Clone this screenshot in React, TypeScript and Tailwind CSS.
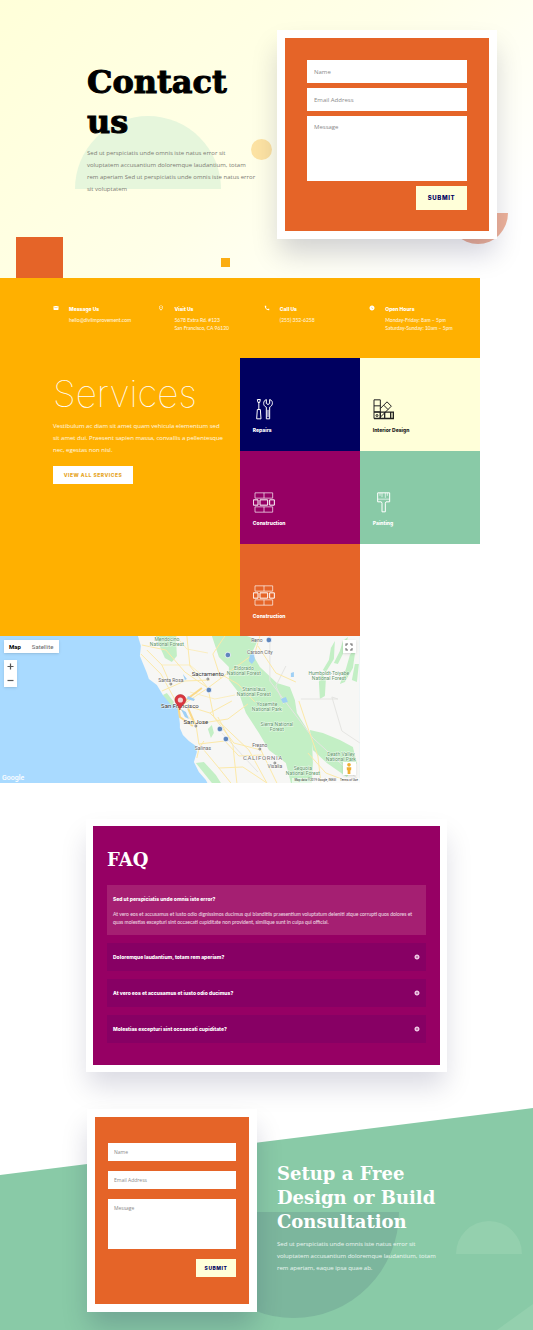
import React, { useState } from "react";
import {
  MdAddCircle,
  MdCall,
  MdEmail,
  MdFullscreen,
  MdOutlinePlace,
  MdWatchLater,
} from "react-icons/md";

const display = "font-['DejaVu_Serif',serif] font-bold";
const heading = "font-['Inter',sans-serif] font-extrabold";

function ContactForm({ id, compact = false }: { id: string; compact?: boolean }) {
  const field =
    "block w-full rounded-none border-0 bg-white text-gray-700 placeholder:text-[#8a8a8a] outline-none " +
    (compact ? "px-[6px] text-[5px]" : "px-[7px] text-[6px]");
  return (
    <div className="bg-white p-2 shadow-[0_16px_26px_-2px_rgba(0,0,60,0.18)]">
      <form
        onSubmit={(e) => e.preventDefault()}
        className={
          "flex flex-col bg-[#e56428] " +
          (compact ? "gap-[10px] px-[13px] pt-[26px] pb-[27px]" : "gap-[5px] px-[22px] pt-[22px] pb-[21px]")
        }
      >
        <input
          id={id + "-name"}
          aria-label="Name"
          placeholder="Name"
          className={field + (compact ? " h-[18px]" : " h-[23px]")}
        />
        <input
          id={id + "-email"}
          type="email"
          aria-label="Email Address"
          placeholder="Email Address"
          className={field + (compact ? " h-[18px]" : " h-[23px]")}
        />
        <textarea
          id={id + "-message"}
          aria-label="Message"
          placeholder="Message"
          className={
            field +
            (compact
              ? " h-[50px] resize-none pt-[5px] leading-[8px]"
              : " h-[65px] resize-none pt-[7px] leading-[9px]")
          }
        />
        <button
          type="submit"
          className={
            "self-end bg-[#ffffd9] tracking-widest text-[#000060] " +
            heading +
            (compact
              ? " h-[18px] w-[40px] text-[5px] leading-[6px]"
              : " h-[24px] w-[51px] text-[6px] leading-[8px]")
          }
        >
          SUBMIT
        </button>
      </form>
    </div>
  );
}

function Hero() {
  return (
    <section className="relative grid grid-cols-[87fr_190fr_220fr_36fr] bg-[linear-gradient(135deg,#ffffd9_0%,#ffffe8_50%,#ffffff_90%)] pt-[30px] pb-[39px]">
      <svg className="absolute top-[116px] left-[75px] h-[73px] w-[146px]" viewBox="0 0 146 73" aria-hidden="true">
        <path d="M0 73a73 73 0 0 1 146 0z" fill="#e6f6dc" />
      </svg>
      <span className="absolute top-[139px] left-[251px] size-[21px] rounded-full bg-[#fde3a3]" />
      <span className="absolute bottom-0 left-[16px] h-[41px] w-[47px] bg-[#e56428]" />
      <span className="absolute bottom-[11px] left-[221px] size-[9px] bg-[#fbad12]" />
      <svg className="absolute top-[213px] left-[448px] h-[31px] w-[60px]" viewBox="0 0 60 31" aria-hidden="true">
        <path d="M0 0h60a30 31 0 0 1-60 0z" fill="#efb39b" />
      </svg>
      <div className="relative col-start-2 pt-[32px] pr-[19px]">
        <h1 className={"text-[32px] leading-[40px] text-black [-webkit-text-stroke:1px_black] " + display}>
          Contact us
        </h1>
        <p className="mt-[5px] text-[6px] leading-[12px] text-[#7c7c74]">
          Sed ut perspiciatis unde omnis iste natus error sit voluptatem accusantium doloremque
          laudantium, totam rem aperiam Sed ut perspiciatis unde omnis iste natus error sit voluptatem
        </p>
      </div>
      <div className="relative col-start-3">
        <ContactForm id="hero" />
      </div>
    </section>
  );
}

const contacts = [
  { Icon: MdEmail, title: "Message Us", lines: ["hello@diviimprovement.com"] },
  { Icon: MdOutlinePlace, title: "Visit Us", lines: ["5678 Extra Rd. #123", "San Francisco, CA 96120"] },
  { Icon: MdCall, title: "Call Us", lines: ["(255) 352-6258"] },
  {
    Icon: MdWatchLater,
    title: "Open Hours",
    lines: ["Monday-Friday: 8am – 5pm", "Saturday-Sunday: 10am – 5pm"],
  },
];

function ContactBar() {
  return (
    <div className="grid h-20 grid-cols-4 bg-[#ffb000] pt-[27px] pr-[5px] pl-[53px] text-white">
      {contacts.map(({ Icon, title, lines }) => (
        <div key={title} className="flex gap-[10px]">
          <Icon className="size-[6px] shrink-0" />
          <div className="whitespace-nowrap">
            <h2 className={"text-[5px] leading-[8px] " + heading}>{title}</h2>
            <p className="mt-[3px] font-['Lato',sans-serif] text-[5px] leading-[8px] text-white/90">
              {lines.map((line) => (
                <span key={line} className="block">
                  {line}
                </span>
              ))}
            </p>
          </div>
        </div>
      ))}
    </div>
  );
}

function ToolsIcon() {
  return (
    <>
      <path d="M13 1h9l-2 9h-5zM17.500 10v20" />
      <path d="M13 31h9l2 28H11z" />
      <path d="M40 1v12l5 3 5-3V1c7 2 9 8 8 13-1 5-4 8-8 10v35H40V24c-5-2-8-6-8-11 0-6 3-10 8-12z" />
      <path d="M45 32v22" />
    </>
  );
}

function SwatchIcon() {
  return (
    <>
      <path d="M3 2h19v56H3zM3 20h19M3 38h19" />
      <path d="M22 28 42 8l13 13-34 34M32 18l13 13" />
      <path d="M3 39h58v19H3M35 39v19M53 39v19M22 39v19" strokeWidth="4" />
      <circle cx="12" cy="49" r="3" />
    </>
  );
}

function BricksIcon() {
  return (
    <>
      <path d="M6 2h53v16H6zM33 2v16M6 44h53v16H6zM33 44v16" strokeWidth="2" />
      <path d="M1 23h14v16H1zM21 23h23v16H21zM50 23h14v16H50z" />
    </>
  );
}

function BrushIcon() {
  return (
    <>
      <path d="M14 2h36v27H39l-2 4v26H27V33l-2-4H14z" />
      <path d="M14 21h36M21 2v9M27 2v13M37 2v15M43 2v9" strokeWidth="2" />
    </>
  );
}

const services = [
  { name: "Repairs", Icon: ToolsIcon, tone: "bg-[#000060] text-white" },
  { name: "Interior Design", Icon: SwatchIcon, tone: "bg-[#ffffd9] text-[#222]" },
  { name: "Construction", Icon: BricksIcon, tone: "bg-[#960064] text-white" },
  { name: "Painting", Icon: BrushIcon, tone: "bg-[#89caa7] text-white" },
  { name: "Construction", Icon: BricksIcon, tone: "bg-[#e56428] text-white" },
];

function Services() {
  return (
    <section className="relative w-[90%]">
      <ContactBar />
      <div className="grid grid-cols-2">
        <div className="bg-[#ffb000] pt-[14px] pr-[13px] pl-[53px] text-white">
          <h2 className="font-['Inter',sans-serif] text-[37px] leading-[44px] font-thin">Services</h2>
          <p className="mt-[4px] text-[6px] leading-[12px] text-white/90">
            Vestibulum ac diam sit amet quam vehicula elementum sed sit amet dui. Praesent sapien
            massa, convallis a pellentesque nec, egestas non nisl.
          </p>
          <a
            href="#services"
            className={
              "mt-[10px] inline-flex h-[18px] w-20 items-center justify-center bg-white text-[5px] leading-[6px] tracking-widest text-[#e6a51e] " +
              heading
            }
          >
            VIEW ALL SERVICES
          </a>
        </div>
        <ul className="grid grid-cols-2 grid-rows-[93px_93px_92px]">
          {services.map(({ name, Icon, tone }, i) => (
            <li key={i} className={"pt-[41px] pl-[13px] " + tone}>
              <svg
                viewBox="0 0 66 62"
                className="h-[21px] w-[22px] fill-none stroke-current stroke-3"
                aria-hidden="true"
              >
                <Icon />
              </svg>
              <h3 className={"mt-[6px] text-[5px] leading-[8px] " + heading}>{name}</h3>
            </li>
          ))}
        </ul>
      </div>
    </section>
  );
}

const towns = [
  { x: 208, y: 40, name: "Sacramento", big: true },
  { x: 171, y: 46, name: "Santa Rosa", big: false },
  { x: 180, y: 72, name: "San Francisco", big: true },
  { x: 196, y: 88, name: "San Jose", big: true },
  { x: 260, y: 111, name: "Fresno", big: false },
  { x: 275, y: 132, name: "Visalia", big: false },
  { x: 203, y: 114, name: "Salinas", big: false },
  { x: 260, y: 18, name: "Carson City", big: false },
  { x: 257, y: 6, name: "Reno", big: false },
];

const parks = [
  { x: 167, y: 5, lines: ["Mendocino", "National Forest"] },
  { x: 244, y: 34, lines: ["Eldorado", "National Forest"] },
  { x: 254, y: 55, lines: ["Stanislaus", "National Forest"] },
  { x: 267, y: 70, lines: ["Yosemite", "National Park"] },
  { x: 277, y: 90, lines: ["Sierra National", "Forest"] },
  { x: 329, y: 39, lines: ["Humboldt-Toiyabe", "National Forest"] },
  { x: 341, y: 120, lines: ["Death Valley", "National Park"] },
  { x: 303, y: 134, lines: ["Sequoia", "National Forest"] },
];

function MapSection() {
  const [kind, setKind] = useState("Map");
  return (
    <section className="relative h-[147px] w-[67.5%] overflow-hidden">
      <svg
        viewBox="0 0 360 147"
        preserveAspectRatio="xMidYMid slice"
        className="h-full w-full font-['Roboto',sans-serif]"
        role="img"
        aria-label="Map of northern California"
      >
        <rect width="360" height="147" fill="#a9daff" />
        <path
          d="M138 0l3 10-1 10 7 17 2 6 8 6 6 10 7 6 8 6 1 8 1 9 0 4 3 7 6 6 7 5 1 6-3 10 5 10 7 8 4 8H360V0z"
          fill="#f7f7f5"
        />
        <g fill="#c3efc5">
          <path d="M156 0h20l1 20-5 6-7-4-4-9z" />
          <path d="M212 0h35l11 4-6 13 8 14 17 16 13 4 5 13 2 13 15 24 1 26-1 20h-21l-5-20-17-13-10-17-13-20-7-20-10-13V31l-10-10z" />
          <path d="M310 94l13 3 17 7 13 7 4 16-10 14-20-14-14-13z" />
          <path d="M163 59l4-2 7 9-2 4zM196 127l8-1 12 13 5 8h-9zM208 93l4-4 2 8-3 5z" />
          <path d="M331 12l4-7-1 18-8 13-3-2 6-10zM343 5l5-4-3 13-7 14-4-1 6-12zM350 19l6-8-3 21-8 14-5 2 6-15zM319 46l3-8 4 5-1 17-5 3zM355 28h4l-2 18-5-2z" />
        </g>
        <g fill="none" stroke="#e5e5e2" strokeWidth="1">
          <path d="M270 0v45l43 57 47 43M301 63h37l-6-2 10 34 18 12" />
          <path d="M222 97l36 39M286 30l-10 20 8 18" />
        </g>
        <g fill="none" stroke="#fce9a9" strokeWidth="1">
          <path d="M178 71l18 17 3 20 20 24 12 15M181 70l27-18 24-18 23-17 5-17M208 52L190 30l-3-30M184 69l26 8 22-12M208 52l6 29 20 26 27 7 16 33M210 77l39 37 18 33" />
          <path d="M141 18l20 20 17 31M142 9l24 5 19 22 23 16M162 55l23-10 25-1M196 88l32-5 20-15M199 108l26-3 14 15 24-1M219 132l24-1 24 16M171 49l-9-20-15-15M204 105l-5 8-2 9M225 0l-12 18 8 25M224 40l14 8 17 18M218 81l15 28 4 38M258 10l18 27 20 9M299 65l8 24 11 31 3 27M308 117l18 20 21 8" />
          <path d="M176 0l11 13 21 4M162 29h28l12 10M190 56l25 7 20-4" strokeWidth="0.7" />
        </g>
        <path d="M178 70l24-18M178 68l2 13 13 9M188 72l7 16" fill="none" stroke="#fad98a" strokeWidth="2" />
        <g fill="#9fd0f5">
          <path d="M181 73l5 3 3 7-4-2zM250 19l4-2 1 7-3 4-3-3zM281 63l5-2 2 5-5 1zM291 37l3-1v5h-3zM188 60l7 3-1 2-7-2zM202 36l3 2-1 2-2-2zM183 38l4 5-2 1z" />
        </g>
        <g fill="#5f86bd" stroke="#fff" strokeWidth="0.7">
          <circle cx="228" cy="19" r="2.800" />
          <circle cx="209" cy="54" r="2.800" />
          <circle cx="220" cy="93" r="2.800" />
          <circle cx="226" cy="103" r="2.800" />
          <circle cx="269" cy="4" r="2.800" />
        </g>
        <g fill="#fff" stroke="#555" strokeWidth="0.7">
          <circle cx="208" cy="43" r="1" />
          <circle cx="171" cy="48" r="1" />
          <circle cx="196" cy="90" r="1" />
          <circle cx="260" cy="113" r="1" />
          <circle cx="275" cy="127" r="1" />
        </g>
        <g textAnchor="middle" stroke="#fff" strokeWidth="1" paintOrder="stroke" strokeOpacity="0.7">
          {parks.map((p) => (
            <text key={p.x} className="text-[5px]" fill="#5d9468">
              {p.lines.map((line, i) => (
                <tspan key={line} x={p.x} y={p.y + i * 5}>
                  {line}
                </tspan>
              ))}
            </text>
          ))}
          {towns.map((t) => (
            <text
              key={t.name}
              x={t.x}
              y={t.y}
              fill={t.big ? "#333" : "#666"}
              className={t.big ? "text-[6px]" : "text-[5px]"}
            >
              {t.name}
            </text>
          ))}
          <text x="263" y="124" fill="#777" className="text-[6px] tracking-widest">
            CALIFORNIA
          </text>
        </g>
        <path d="M180 74c-1-5-5-6-5-10a5.500 5.500 0 0 1 11 0c0 4-5 5-6 10z" fill="#d9363e" stroke="#a8242c" strokeWidth="0.5" />
        <circle cx="180.500" cy="64" r="2.600" fill="#f4d3d5" />
      </svg>
      <div className="absolute top-[4px] left-[4px] flex bg-white font-['Roboto',sans-serif] text-[6px] leading-[13px] shadow-sm">
        {["Map", "Satellite"].map((k) => (
          <button
            key={k}
            type="button"
            onClick={() => setKind(k)}
            className={k === kind ? "px-[5px] font-bold text-black" : "px-[6px] text-[#666]"}
          >
            {k}
          </button>
        ))}
      </div>
      <div className="absolute top-[24px] left-[4px] flex w-[13px] flex-col bg-white text-[#555] shadow-sm">
        <button type="button" aria-label="Zoom in" className="flex h-[13px] items-center justify-center">
          <svg viewBox="0 0 7 7" className="size-[7px]">
            <path d="M3.500 0.500v6M0.500 3.500h6" stroke="currentColor" strokeWidth="1.200" />
          </svg>
        </button>
        <button type="button" aria-label="Zoom out" className="flex h-[14px] items-center justify-center">
          <svg viewBox="0 0 7 7" className="size-[7px]">
            <path d="M0.500 3.500h6" stroke="currentColor" strokeWidth="1.200" />
          </svg>
        </button>
      </div>
      <button
        type="button"
        aria-label="Full screen"
        className="absolute top-[4px] right-[4px] flex size-[13px] items-center justify-center bg-white text-[#666] shadow-sm"
      >
        <MdFullscreen className="size-[12px]" />
      </button>
      <button
        type="button"
        aria-label="Street view"
        className="absolute right-[4px] bottom-[8px] flex size-[13px] items-center justify-center bg-white shadow-sm"
      >
        <svg viewBox="0 0 8 12" className="h-[11px] w-[8px]" fill="#f0ae32">
          <circle cx="4" cy="2" r="2" />
          <path d="M1.500 4.500h5L6.300 8H5.500v4h-3V8h-.8z" />
        </svg>
      </button>
      <span className="absolute bottom-0 left-[2px] font-['Roboto',sans-serif] text-[7px] leading-[9px] font-medium text-white">
        Google
      </span>
      <p className="absolute right-0 bottom-0 flex gap-[4px] bg-white/60 px-[2px] font-['Roboto',sans-serif] text-[3px] leading-[5px] text-[#333]">
        <span>Map data ©2019 Google, INEGI</span>
        <a href="#terms">Terms of Use</a>
      </p>
    </section>
  );
}

const questions = [
  "Sed ut perspiciatis unde omnis iste error?",
  "Doloremque laudantium, totam rem aperiam?",
  "At vero eos et accusamus et iusto odio ducimus?",
  "Molestias excepturi sint occaecati cupiditate?",
];

function Faq() {
  const [open, setOpen] = useState(0);
  return (
    <section className="grid grid-cols-[86fr_361fr_86fr] pt-[36px] pb-[36px]">
      <div className="col-start-2 bg-white p-[7px] shadow-[0_16px_26px_-2px_rgba(0,0,60,0.15)]">
        <div className="bg-[#960064] px-[14px] pt-[22px] pb-[22px] text-white">
          <h2 className={"text-[18px] leading-[24px] " + display}>FAQ</h2>
          <div className="mt-[13px] flex flex-col gap-2">
            {questions.map((q, i) => (
              <div key={q} className={i === open ? "bg-[#a51f72] pb-[9px]" : "bg-[#870064]"}>
                <h3>
                  <button
                    type="button"
                    aria-expanded={i === open}
                    onClick={() => setOpen(i)}
                    className={
                      "flex h-[28px] w-full items-center justify-between px-[6px] text-left text-[5px] leading-[8px] " +
                      heading
                    }
                  >
                    {q}
                    {i !== open && <MdAddCircle className="size-[6px] text-[#f4d6ec]" />}
                  </button>
                </h3>
                {i === open && (
                  <p className="-mt-[3px] px-[6px] font-['Lato',sans-serif] text-[5px] leading-[8px] text-white/85">
                    At vero eos et accusamus et iusto odio dignissimos ducimus qui blanditiis
                    praesentium voluptatum deleniti atque corrupti quos dolores et quas molestias
                    excepturi sint occaecati cupiditate non provident, similique sunt in culpa qui
                    official.
                  </p>
                )}
              </div>
            ))}
          </div>
        </div>
      </div>
    </section>
  );
}

function Consultation() {
  return (
    <section className="relative grid grid-cols-[87fr_170fr_20fr_165fr_91fr] overflow-x-clip pt-px pb-[18px]">
      <svg
        className="absolute inset-0 h-full w-full"
        viewBox="0 0 533 222"
        preserveAspectRatio="none"
        aria-hidden="true"
      >
        <path d="M0 67L533 0v222H0z" fill="#89caa7" />
        <path d="M188 104h211a105.500 106 0 0 1-211 0z" fill="#7cb69d" />
        <path d="M456 146a33 33 0 0 1 66 0z" fill="#94d0ae" />
        <path d="M497 222l36-26v26z" fill="#94d0ae" />
      </svg>
      <div className="relative col-start-2">
        <ContactForm id="consultation" compact />
      </div>
      <div className="relative col-start-4 pt-[53px] text-white">
        <h2 className={"text-[18px] leading-[24px] " + display}>Setup a Free Design or Build Consultation</h2>
        <p className="mt-[4px] text-[6px] leading-[12px] text-white/85">
          Sed ut perspiciatis unde omnis iste natus error sit voluptatem accusantium doloremque
          laudantium, totam rem aperiam, eaque ipsa quae ab.
        </p>
      </div>
    </section>
  );
}

export default function App() {
  return (
    <main className="overflow-x-clip bg-white font-['Open_Sans',sans-serif]">
      <Hero />
      <Services />
      <MapSection />
      <Faq />
      <Consultation />
    </main>
  );
}
